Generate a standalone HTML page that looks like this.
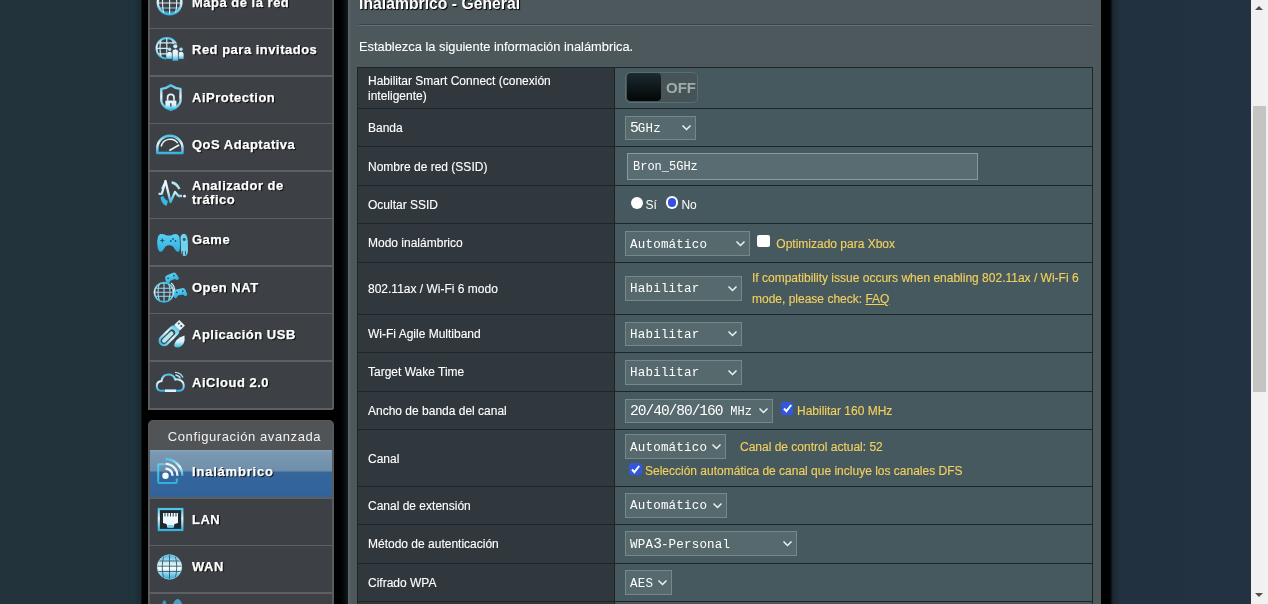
<!DOCTYPE html>
<html><head><meta charset="utf-8">
<style>
*{margin:0;padding:0;box-sizing:border-box}
html,body{width:1268px;height:604px;overflow:hidden;background:#22333c;font-family:"Liberation Sans",sans-serif}
.abs{position:absolute}
#leftshade{left:0;top:0;width:148px;height:604px;background:linear-gradient(to right,#22333c 0,#22333c 120px,#1f343d 134px,#1a2b33 140.5px,#000 142.5px,#000 148px)}
#rightbg{left:1101px;top:0;width:150px;height:604px;background:linear-gradient(to right,#000 0,#000 9px,#1c2830 12px,#223140 20px,#223242 150px)}
#midblack{left:333px;top:0;width:15px;height:604px;background:linear-gradient(to right,#000 0,#000 7px,#050a0c 11px,#0f1b20 15px)}
#panel{left:348px;top:0;width:753px;height:604px;background:#4d585c}
#panel:before{content:"";position:absolute;left:0;top:0;width:3px;height:604px;background:linear-gradient(to right,#5b6568,#525c60)}
/* scrollbar */
#sb{left:1251px;top:0;width:17px;height:604px;background:#f1f1f1}
#thumb{left:1253px;top:106px;width:13px;height:286px;background:#c6c3c3}
.arr{position:absolute;left:1255px;width:0;height:0;border-left:4.5px solid transparent;border-right:4.5px solid transparent}
/* sidebar */
.side{left:148px;width:185px;background:#3f4347;border-left:1.5px solid #585c5f;border-right:1.5px solid #585c5f}
.item{position:absolute;left:148px;width:186px;height:47.5px;background:#3d4145;border-left:2px solid #585c5f;border-right:2.4px solid #585c5f}
.sep{position:absolute;left:148px;width:185px;height:1.5px;background:#5c6063}
.itxt{position:absolute;left:192px;color:#fff;font-weight:bold;font-size:13px;letter-spacing:0.5px;-webkit-text-stroke:0.25px #fff;text-shadow:1px 1px 1px #000;white-space:nowrap;line-height:14px}
.ico{position:absolute}
/* table */
.th{position:absolute;left:358px;width:257px;background:#30383e;color:#fff;-webkit-text-stroke:0.12px #fff;font-size:12px;line-height:15px;padding-left:10px;padding-top:2.2px;display:flex;align-items:center}
.td{position:absolute;left:615px;width:477px;background:#46595e}
.hl{position:absolute;left:357.5px;width:735.5px;height:1.2px;background:#1c262a}
.sel{position:absolute;left:625px;height:24.6px;background:#566a6e;border:1.3px solid #76888c;color:#fff;font-family:"Liberation Mono",monospace;font-size:12.5px;letter-spacing:0.2px;line-height:22px;padding-left:4.1px;padding-top:1.3px;white-space:nowrap}
.d{font-size:14.6px;letter-spacing:-1.06px;line-height:0}
.chev{position:absolute;top:8.6px;width:9px;height:5px;overflow:visible}
.y{position:absolute;color:#f2cf5e;-webkit-text-stroke:0.15px #f2cf5e;font-size:12px;white-space:nowrap;line-height:15px}
</style></head><body>
<div id="root" style="position:absolute;left:0;top:0;width:1268px;height:604px;will-change:transform">
<div class="abs" id="leftshade"></div>
<div class="abs" id="midblack"></div>
<div class="abs" style="left:148px;top:0;width:186px;height:604px;background:#000"></div>
<div class="abs" id="panel"></div>
<div class="abs" id="rightbg"></div>
<div class="abs" id="sb"></div>
<div class="abs" id="thumb"></div>
<div class="arr" style="top:6px;border-bottom:4.6px solid #505050"></div>
<div class="arr" style="top:592.5px;border-top:4.6px solid #505050"></div>

<!-- SIDEBAR -->
<div class="item" style="top:-19px"></div>
<div class="item" style="top:28.5px"></div>
<div class="item" style="top:76px"></div>
<div class="item" style="top:123.5px"></div>
<div class="item" style="top:171px"></div>
<div class="item" style="top:218.5px"></div>
<div class="item" style="top:266px"></div>
<div class="item" style="top:313.5px"></div>
<div class="item" style="top:361px"></div>
<div class="sep" style="top:27.75px"></div>
<div class="sep" style="top:75.25px"></div>
<div class="sep" style="top:122.75px"></div>
<div class="sep" style="top:170.25px"></div>
<div class="sep" style="top:217.75px"></div>
<div class="sep" style="top:265.25px"></div>
<div class="sep" style="top:312.75px"></div>
<div class="sep" style="top:360.25px"></div>
<div class="sep" style="top:408px"></div>
<div class="itxt" style="top:-4.5px">Mapa de la red</div>
<div class="itxt" style="top:43.0px">Red para invitados</div>
<div class="itxt" style="top:90.5px">AiProtection</div>
<div class="itxt" style="top:138.0px">QoS Adaptativa</div>
<div class="itxt" style="top:179px">Analizador de<br>tráfico</div>
<div class="itxt" style="top:233.0px">Game</div>
<div class="itxt" style="top:280.5px">Open NAT</div>
<div class="itxt" style="top:328.0px">Aplicación USB</div>
<div class="itxt" style="top:375.5px">AiCloud 2.0</div>
<div class="abs" style="left:148px;top:420.4px;width:186px;height:30px;background:#505457;border-radius:5px 5px 0 0;border:1.5px solid #56595c;border-right-width:2.4px;border-bottom:none"></div>
<div class="abs" style="left:167.8px;top:429px;color:#f2f2f2;font-size:13px;letter-spacing:0.6px;line-height:15px;white-space:nowrap">Configuración avanzada</div>
<div class="abs" style="left:148px;top:450px;width:186px;height:48px;background:linear-gradient(#8aa6bd 0,#7b99b2 2px,#6f8eaa 21px,#36679b 22px,#31629a 48px);border-left:2px solid #585c5f;border-right:2.4px solid #585c5f"></div>
<div class="itxt" style="top:465px;letter-spacing:0.8px">Inalámbrico</div>
<div class="item" style="top:498px"></div>
<div class="sep" style="top:497.25px"></div>
<div class="itxt" style="top:512.5px">LAN</div>
<div class="item" style="top:545.5px"></div>
<div class="sep" style="top:544.75px"></div>
<div class="itxt" style="top:560.0px">WAN</div>
<div class="item" style="top:593px"></div>
<div class="sep" style="top:592.25px"></div>
<div class="itxt" style="top:607.5px"></div>
<svg class="abs" style="left:0;top:0;pointer-events:none" width="1268" height="604" viewBox="0 0 1268 604">
<defs>
<linearGradient id="gw" x1="0" y1="0" x2="0" y2="1"><stop offset="0" stop-color="#eefaff"/><stop offset="0.5" stop-color="#d6f1fa"/><stop offset="1" stop-color="#33b6e3"/></linearGradient>
<linearGradient id="gt" x1="0" y1="0" x2="0" y2="1"><stop offset="0" stop-color="#4cc4ea"/><stop offset="0.45" stop-color="#e6f7fc"/><stop offset="1" stop-color="#32b3e2"/></linearGradient>
<linearGradient id="gcy" x1="0" y1="0" x2="0" y2="1"><stop offset="0" stop-color="#5ad0f2"/><stop offset="1" stop-color="#2fb0e0"/></linearGradient>
<clipPath id="c1"><circle cx="169.6" cy="2.6" r="11.5"/></clipPath>
<clipPath id="c2"><circle cx="166.8" cy="48.3" r="10"/></clipPath>
<clipPath id="c3"><circle cx="164" cy="292" r="9.3"/></clipPath>
<clipPath id="c4"><circle cx="169.5" cy="567" r="12.3"/></clipPath>
<linearGradient id="gglobe" x1="0" y1="0" x2="0" y2="1"><stop offset="0" stop-color="#3fb2dc"/><stop offset="0.3" stop-color="#bfe8f4"/><stop offset="0.55" stop-color="#ffffff"/><stop offset="0.75" stop-color="#8fd6ee"/><stop offset="1" stop-color="#2aa6d6"/></linearGradient>
</defs>
<!-- 1 Mapa de la red globe -->
<g>
<circle cx="169.6" cy="2.6" r="11.8" fill="none" stroke="url(#gw)" stroke-width="2.4"/>
<g clip-path="url(#c1)" stroke="#dcefF5" stroke-width="1.1" fill="none">
<line x1="155" y1="-2" x2="185" y2="-2"/><line x1="155" y1="3" x2="185" y2="3"/><line x1="155" y1="8" x2="185" y2="8" stroke="#7fd0ea"/><line x1="155" y1="12" x2="185" y2="12" stroke="#3fb8e4"/>
<line x1="169.6" y1="-10" x2="169.6" y2="15"/><path d="M164 -10 Q161 3 164 15"/><path d="M175.2 -10 Q178.2 3 175.2 15"/>
</g>
</g>
<!-- 2 Red para invitados -->
<g>
<circle cx="166.8" cy="48.3" r="10.3" fill="none" stroke="url(#gt)" stroke-width="1.9"/>
<g clip-path="url(#c2)" stroke="#cfeef8" stroke-width="1.2" fill="none">
<line x1="155" y1="42.8" x2="180" y2="42.8"/><line x1="155" y1="48.3" x2="180" y2="48.3"/><line x1="155" y1="53.8" x2="180" y2="53.8"/>
<line x1="166.8" y1="36" x2="166.8" y2="60"/><path d="M161.5 37 Q158.5 48 161.5 59"/><path d="M172 37 Q175 48 172 59"/>
</g>
<path d="M168.5 46 Q175 41 184.5 46 L186 62 L166 62 Z" fill="#3f4347"/>
<circle cx="169.6" cy="49.2" r="1.7" fill="#a8e4f4"/><circle cx="175.3" cy="46.3" r="2.1" fill="#c4eef8"/><circle cx="181" cy="49.2" r="1.7" fill="#a8e4f4"/>
<path d="M167 59 L167 54.5 Q167 51.8 169.6 51.8 Q172.2 51.8 172.2 54.5 L172.2 59 Z" fill="url(#gw)"/>
<path d="M178.4 59 L178.4 54.5 Q178.4 51.8 181 51.8 Q183.6 51.8 183.6 54.5 L183.6 59 Z" fill="url(#gw)"/>
<path d="M172.2 61 L172.2 51.5 Q172.2 49 175.3 49 Q178.4 49 178.4 51.5 L178.4 61 Z" fill="url(#gw)" stroke="#3f4347" stroke-width="0.7"/>
</g>
<!-- 3 AiProtection shield -->
<g>
<path d="M170.8 85.2 Q166 88.5 161.3 88.8 L161.3 101 Q161.8 106.5 170.8 110 Q179.8 106.5 180.5 101 L180.5 88.8 Q175.5 88.5 170.8 85.2 Z" fill="none" stroke="url(#gt)" stroke-width="2.3" stroke-linejoin="round"/>
<path d="M167.6 100.5 v-3 a3.2 3.2 0 0 1 6.4 0 v3" fill="none" stroke="#dff4fa" stroke-width="1.7"/>
<rect x="165.4" y="100.5" width="11" height="8.8" rx="1" fill="url(#gw)"/>
<rect x="170.2" y="103.2" width="1.3" height="3.4" fill="#2b3a40"/>
</g>
<!-- 4 QoS gauge -->
<g>
<path d="M157.3 153 L157.3 148.3 A12.6 12.6 0 0 1 182.5 148.3 L182.5 153 Z" fill="none" stroke="url(#gt)" stroke-width="2.4" stroke-linejoin="round"/>
<path d="M161.2 146.5 A9.2 9.2 0 0 1 177.8 143.2" fill="none" stroke="#e9f7fb" stroke-width="1.5"/>
<line x1="169.8" y1="150.2" x2="178.6" y2="145.2" stroke="#e9f7fb" stroke-width="1.7" stroke-linecap="round"/>
</g>
<!-- 5 Analizador -->
<g>
<path d="M160.5 197 Q161 203.5 166.5 206 L168 201 Q164 199 163.5 196 Z" fill="#3cb6e2"/>
<path d="M161 188.5 Q162 185 164 183.2 L164.8 186 Q163.5 187.5 163 189.5 Z" fill="#8ad6ee"/>
<path d="M171.5 181.2 Q177.5 181.5 180.5 188.5 L178.3 189.5 Q176 184.5 171.8 184 Z" fill="#b4e6f4"/>
<polyline points="158.5,193.8 161.8,193.8 165.5,181 170.5,202 175,192 178.5,196 182,196" fill="none" stroke="url(#gw)" stroke-width="2.3" stroke-linejoin="round"/>
<circle cx="184.5" cy="196.2" r="1.4" fill="#eefaff"/>
</g>
<!-- 6 Game -->
<g>
<path d="M160.5 234 Q157.5 235 157.2 241 Q157 249 159.5 251.5 Q161.8 252.5 163.5 249.5 L165.5 246.5 Q169 244 173 246.5 L175 249.5 Q177 252.5 179 251.5 Q180 250 180 245 L179.5 237.5 Q178.5 234 175.5 234 Q172.5 234.3 171 235.5 L166.5 235.5 Q165 234.3 162 234 Z" fill="url(#gcy)"/>
<path d="M180.5 237 Q181.5 233.8 184.3 233.8 Q187.5 234.5 187.8 241 L188 251 Q187.5 256 184.5 256 Q181.5 256 181 251 Z" fill="#6fd3f0"/>
<path d="M160.3 240.5 h4 M162.3 238.5 v4" stroke="#1f5a78" stroke-width="1.2"/>
<circle cx="173" cy="239" r="0.9" fill="#1f5a78"/><circle cx="175.5" cy="241" r="0.9" fill="#1f5a78"/><circle cx="170.8" cy="241" r="0.9" fill="#1f5a78"/>
<circle cx="184.2" cy="239.5" r="1.4" fill="#1f5a78"/>
<path d="M182.5 251 v4 M185.5 251 v4" stroke="#3f4347" stroke-width="0.8"/>
</g>
<!-- 7 Open NAT -->
<g>
<circle cx="164" cy="292.3" r="9.6" fill="none" stroke="url(#gt)" stroke-width="1.7"/>
<g clip-path="url(#c3)" stroke="#9ad9ee" stroke-width="1.1" fill="none">
<line x1="153" y1="288.3" x2="175" y2="288.3"/><line x1="153" y1="292.3" x2="175" y2="292.3"/><line x1="153" y1="296.3" x2="175" y2="296.3"/>
<line x1="164" y1="282" x2="164" y2="302"/><path d="M159.5 283 Q156.5 292 159.5 301"/><path d="M168.5 283 Q171.5 292 168.5 301"/>
</g>
<path d="M171 283 Q175 286 174.5 291" fill="none" stroke="#d6f1f8" stroke-width="1.2"/>
<g transform="translate(171.5 278) scale(0.85) translate(-171.5 -278) rotate(-24 171.5 278)">
<path d="M164.5 275.5 Q165 273 168 273 L175 273 Q178 273 178.5 275.5 L179.5 280.5 Q179.5 283 177.5 283 Q176 283 174.5 280.5 L168.5 280.5 Q167 283 165.5 283 Q163.5 283 163.5 280.5 Z" fill="url(#gcy)"/>
<circle cx="167.8" cy="276.5" r="1" fill="#1f4f66"/><circle cx="175.2" cy="276.5" r="1" fill="#1f4f66"/>
</g>
<g transform="translate(180 293) scale(0.85) translate(-180 -293) rotate(-12 180 293)">
<path d="M173 290.5 Q173.5 288 176.5 288 L183.5 288 Q186.5 288 187 290.5 L188 295.5 Q188 298 186 298 Q184.5 298 183 295.5 L177 295.5 Q175.5 298 174 298 Q172 298 172 295.5 Z" fill="url(#gcy)"/>
<circle cx="176.3" cy="291.5" r="1" fill="#1f4f66"/><circle cx="183.7" cy="291.5" r="1" fill="#1f4f66"/>
</g>
</g>
<!-- 8 USB -->
<g>
<path d="M174 346 Q175 338.5 184.5 335.5 Q185.5 344.5 180 347 Q176.5 348.5 174 346 Z" fill="url(#gw)"/>
<g transform="translate(-2 1.5) rotate(45 171 335)">
<rect x="165" y="322" width="11" height="25" rx="5.5" fill="url(#gt)"/>
<rect x="167.3" y="327" width="6.4" height="17.8" rx="3.2" fill="#3a4a50"/>
<rect x="168.5" y="329" width="4" height="14.5" rx="2" fill="#b6e6f4"/>
<rect x="166.5" y="316" width="8" height="7" fill="#e2f5fb"/>
<rect x="168" y="318" width="1.6" height="1.8" fill="#3f4347"/><rect x="171.4" y="318" width="1.6" height="1.8" fill="#3f4347"/>
</g>
</g>
<!-- 9 AiCloud -->
<g>
<path d="M160.8 390.8 Q156.8 390.5 156.8 386 Q156.8 381.5 161.5 381 Q162.5 374.5 168.5 374.5 Q173.8 374.5 175.3 379.5 Q177 378.8 178.5 379.5 Q183.8 381 183.8 386 Q183.5 390.8 179 390.8 Z" fill="none" stroke="url(#gt)" stroke-width="2"/>
<rect x="165" y="389.5" width="11" height="2.5" fill="#dff3f9"/>
<path d="M175 372.3 Q180.5 372.5 183 377.5" fill="none" stroke="#b9e6f3" stroke-width="1.3"/>
<path d="M175.5 375 Q179 375.5 180.5 378.5" fill="none" stroke="#b9e6f3" stroke-width="1.3"/>
</g>
<!-- 10 Wireless -->
<g>
<path d="M164.5 464.2 L159.5 464.2 Q158.2 464.2 158.2 465.5 L158.2 481.7 Q158.2 483 159.5 483 L175.5 483 Q176.8 483 176.8 481.7 L176.8 478.5" fill="none" stroke="url(#gcy)" stroke-width="2"/>
<circle cx="165.5" cy="475.7" r="3.2" fill="#f2fbff"/>
<path d="M165.5 468.6 A7.1 7.1 0 0 1 172.6 475.7" fill="none" stroke="#f2fbff" stroke-width="2.3"/>
<path d="M165.5 463.8 A11.9 11.9 0 0 1 177.4 475.7" fill="none" stroke="#e6f6fb" stroke-width="2.3"/>
<path d="M165.5 458.9 A16.8 16.8 0 0 1 182.3 475.7" fill="none" stroke="url(#gt)" stroke-width="2.3"/>
</g>
<!-- 11 LAN -->
<g>
<rect x="158.8" y="509" width="23.5" height="21" fill="#1d2a30" stroke="url(#gt)" stroke-width="2.2"/>
<path d="M163 513 L178 513 L178 523 L174.5 524 L173.5 527.5 L167.5 527.5 L166.5 524 L163 523 Z" fill="#eefaff"/>
<path d="M165 513 v3.5 M167.8 513 v3.5 M170.5 513 v3.5 M173.2 513 v3.5 M176 513 v3.5" stroke="#1d2a30" stroke-width="0.9"/>
<rect x="167.5" y="525" width="6" height="2.5" fill="#6fd2ef"/>
</g>
<!-- 12 WAN globe -->
<g>
<circle cx="169.5" cy="567" r="12.4" fill="url(#gglobe)"/>
<g clip-path="url(#c4)" stroke="#355563" stroke-width="0.85" fill="none">
<line x1="155" y1="561" x2="185" y2="561"/><line x1="155" y1="566.2" x2="185" y2="566.2"/><line x1="155" y1="571.5" x2="185" y2="571.5"/>
<line x1="169.5" y1="553" x2="169.5" y2="581"/><path d="M164 555 Q160.5 567 164 579"/><path d="M175 555 Q178.5 567 175 579"/>
</g>
<circle cx="169.5" cy="567" r="12.2" fill="none" stroke="#9fdcef" stroke-width="0.8" opacity="0.7"/>
</g>
<!-- 13 partial -->
<g>
<path d="M162 604 L163.5 600.5 L165.5 600.5 L166.5 604 Z" fill="#4aa8d0" opacity="0.8"/>
<path d="M173 604 Q175 599 178 599 Q181 600 182 604 Z" fill="#4fb6de" opacity="0.8"/>
</g>
</svg>


<!-- CONTENT -->
<div class="abs" style="left:359px;top:-5px;color:#fff;font-weight:bold;font-size:15.75px;line-height:18px;text-shadow:1px 1px 1px #000;white-space:nowrap">Inalámbrico - General</div>
<div class="abs" style="left:359px;top:23.6px;width:734px;height:1px;background:#3a4448"></div><div class="abs" style="left:359px;top:24.8px;width:734px;height:1px;background:#617075"></div>
<div class="abs" style="left:359px;top:39px;color:#fff;-webkit-text-stroke:0.1px #fff;font-size:12.85px;line-height:16px;white-space:nowrap">Establezca la siguiente información inalámbrica.</div>

<div class="th" style="top:67.3px;height:41.10000000000001px">Habilitar Smart Connect (conexión<br>inteligente)</div>
<div class="td" style="top:67.3px;height:41.10000000000001px"></div>
<div class="th" style="top:108.4px;height:38.29999999999998px">Banda</div>
<div class="td" style="top:108.4px;height:38.29999999999998px"></div>
<div class="th" style="top:146.7px;height:38.70000000000002px">Nombre de red (SSID)</div>
<div class="td" style="top:146.7px;height:38.70000000000002px"></div>
<div class="th" style="top:185.4px;height:38.19999999999999px">Ocultar SSID</div>
<div class="td" style="top:185.4px;height:38.19999999999999px"></div>
<div class="th" style="top:223.6px;height:38.50000000000003px">Modo inalámbrico</div>
<div class="td" style="top:223.6px;height:38.50000000000003px"></div>
<div class="th" style="top:262.1px;height:52.299999999999955px">802.11ax / Wi-Fi 6 modo</div>
<div class="td" style="top:262.1px;height:52.299999999999955px"></div>
<div class="th" style="top:314.4px;height:38.0px">Wi-Fi Agile Multiband</div>
<div class="td" style="top:314.4px;height:38.0px"></div>
<div class="th" style="top:352.4px;height:38.80000000000001px">Target Wake Time</div>
<div class="td" style="top:352.4px;height:38.80000000000001px"></div>
<div class="th" style="top:391.2px;height:38.60000000000002px">Ancho de banda del canal</div>
<div class="td" style="top:391.2px;height:38.60000000000002px"></div>
<div class="th" style="top:429.8px;height:56.30000000000001px">Canal</div>
<div class="td" style="top:429.8px;height:56.30000000000001px"></div>
<div class="th" style="top:486.1px;height:38.299999999999955px">Canal de extensión</div>
<div class="td" style="top:486.1px;height:38.299999999999955px"></div>
<div class="th" style="top:524.4px;height:38.700000000000045px">Método de autenticación</div>
<div class="td" style="top:524.4px;height:38.700000000000045px"></div>
<div class="th" style="top:563.1px;height:38.10000000000002px">Cifrado WPA</div>
<div class="td" style="top:563.1px;height:38.10000000000002px"></div>
<div class="th" style="top:601.2px;height:38.799999999999955px"></div>
<div class="td" style="top:601.2px;height:38.799999999999955px"></div>
<div class="hl" style="top:66.7px"></div>
<div class="hl" style="top:107.80000000000001px"></div>
<div class="hl" style="top:146.1px"></div>
<div class="hl" style="top:184.8px"></div>
<div class="hl" style="top:223.0px"></div>
<div class="hl" style="top:261.5px"></div>
<div class="hl" style="top:313.79999999999995px"></div>
<div class="hl" style="top:351.79999999999995px"></div>
<div class="hl" style="top:390.59999999999997px"></div>
<div class="hl" style="top:429.2px"></div>
<div class="hl" style="top:485.5px"></div>
<div class="hl" style="top:523.8px"></div>
<div class="hl" style="top:562.5px"></div>
<div class="hl" style="top:600.6px"></div>
<div class="abs" style="left:357px;top:67px;width:1.2px;height:540px;background:#1e2427"></div>
<div class="abs" style="left:613.9px;top:67px;width:1.1px;height:540px;background:#1b2327"></div>
<div class="abs" style="left:1092px;top:67px;width:1.2px;height:540px;background:#1e2427"></div>
<div class="abs" style="left:625.3px;top:72.2px;width:73px;height:31px;border-radius:5px;background:#465357;border:1px solid #5d6c70"></div>
<div class="abs" style="left:626.7px;top:73.3px;width:34px;height:27.7px;border-radius:4px;background:linear-gradient(#1b2b2f,#030606)"></div>
<div class="abs" style="left:666px;top:79px;color:#a0abae;font-weight:bold;font-size:15px;line-height:18px">OFF</div>
<div class="sel" style="top:115.6px;width:71px"><span class="d">5</span>GHz<svg class="chev" style="left:56px" viewBox="0 0 9 5"><path d="M0.5 0.5 L4.5 4.5 L8.5 0.5" fill="none" stroke="#eef3f3" stroke-width="1.45"/></svg></div>
<div class="abs" style="left:627px;top:153px;width:350.5px;height:27px;background:#596c71;border:1.5px solid #899a9e;color:#fff;font-family:'Liberation Mono',monospace;font-size:12px;line-height:24px;padding-left:5px;padding-top:0.8px">Bron_5GHz</div>
<div class="abs" style="left:630.7px;top:196.6px;width:12px;height:12px;border-radius:50%;background:#fff"></div>
<div class="abs" style="left:645.6px;top:198.3px;color:#fff;font-size:12px;line-height:15px">Sí</div>
<div class="abs" style="left:665.6px;top:196.2px;width:12.6px;height:12.6px;border-radius:50%;background:#fff"></div>
<div class="abs" style="left:667.6px;top:198.2px;width:8.6px;height:8.6px;border-radius:50%;background:#3650e0"></div>
<div class="abs" style="left:681.4px;top:198.3px;color:#fff;font-size:12px;line-height:15px">No</div>
<div class="sel" style="top:231.4px;width:124.5px">Automático<svg class="chev" style="left:109.5px" viewBox="0 0 9 5"><path d="M0.5 0.5 L4.5 4.5 L8.5 0.5" fill="none" stroke="#eef3f3" stroke-width="1.45"/></svg></div>
<div class="abs" style="left:757px;top:234.5px;width:13px;height:12.8px;border-radius:2px;background:#fff"></div>
<div class="y" style="left:776.3px;top:236.5px">Optimizado para Xbox</div>
<div class="sel" style="top:276.2px;width:117px">Habilitar<svg class="chev" style="left:102px" viewBox="0 0 9 5"><path d="M0.5 0.5 L4.5 4.5 L8.5 0.5" fill="none" stroke="#eef3f3" stroke-width="1.45"/></svg></div>
<div class="y" style="left:752px;top:267.8px;line-height:21px">If compatibility issue occurs when enabling 802.11ax / Wi-Fi 6<br>mode, please check: <u>FAQ</u></div>
<div class="sel" style="top:321.5px;width:117px">Habilitar<svg class="chev" style="left:102px" viewBox="0 0 9 5"><path d="M0.5 0.5 L4.5 4.5 L8.5 0.5" fill="none" stroke="#eef3f3" stroke-width="1.45"/></svg></div>
<div class="sel" style="top:360px;width:117px">Habilitar<svg class="chev" style="left:102px" viewBox="0 0 9 5"><path d="M0.5 0.5 L4.5 4.5 L8.5 0.5" fill="none" stroke="#eef3f3" stroke-width="1.45"/></svg></div>
<div class="sel" style="top:398.6px;width:148px"><span class="d">20/40/80/160</span> <span style="font-size:12px;letter-spacing:0.1px">MHz</span><svg class="chev" style="left:133px" viewBox="0 0 9 5"><path d="M0.5 0.5 L4.5 4.5 L8.5 0.5" fill="none" stroke="#eef3f3" stroke-width="1.45"/></svg></div>
<div class="abs" style="left:781.2px;top:402px;width:12.2px;height:12.7px;border-radius:2px;background:#3356e0"></div>
<svg class="abs" style="left:781.2px;top:402px" width="13" height="13" viewBox="0 0 13 13"><path d="M3 6.5 L5.4 9.2 L10.2 3" fill="none" stroke="#fff" stroke-width="2"/></svg>
<div class="y" style="left:797px;top:404px">Habilitar 160 MHz</div>
<div class="sel" style="top:434.4px;width:101.2px">Automático<svg class="chev" style="left:86.2px" viewBox="0 0 9 5"><path d="M0.5 0.5 L4.5 4.5 L8.5 0.5" fill="none" stroke="#eef3f3" stroke-width="1.45"/></svg></div>
<div class="y" style="left:740px;top:439.7px">Canal de control actual: 52</div>
<div class="abs" style="left:629.3px;top:463px;width:12.5px;height:12.3px;border-radius:2px;background:#3356e0"></div>
<svg class="abs" style="left:629.3px;top:463px" width="13" height="13" viewBox="0 0 13 13"><path d="M3 6.5 L5.4 9.2 L10.2 3" fill="none" stroke="#fff" stroke-width="2"/></svg>
<div class="y" style="left:645px;top:464px">Selección automática de canal que incluye los canales DFS</div>
<div class="sel" style="top:493.2px;width:101.5px">Automático<svg class="chev" style="left:86.5px" viewBox="0 0 9 5"><path d="M0.5 0.5 L4.5 4.5 L8.5 0.5" fill="none" stroke="#eef3f3" stroke-width="1.45"/></svg></div>
<div class="sel" style="top:531.4px;width:171.5px">WPA<span class="d">3</span>-Personal<svg class="chev" style="left:156.5px" viewBox="0 0 9 5"><path d="M0.5 0.5 L4.5 4.5 L8.5 0.5" fill="none" stroke="#eef3f3" stroke-width="1.45"/></svg></div>
<div class="sel" style="top:570.4px;width:46.5px">AES<svg class="chev" style="left:31.5px" viewBox="0 0 9 5"><path d="M0.5 0.5 L4.5 4.5 L8.5 0.5" fill="none" stroke="#eef3f3" stroke-width="1.45"/></svg></div>

</div>
</body></html>
